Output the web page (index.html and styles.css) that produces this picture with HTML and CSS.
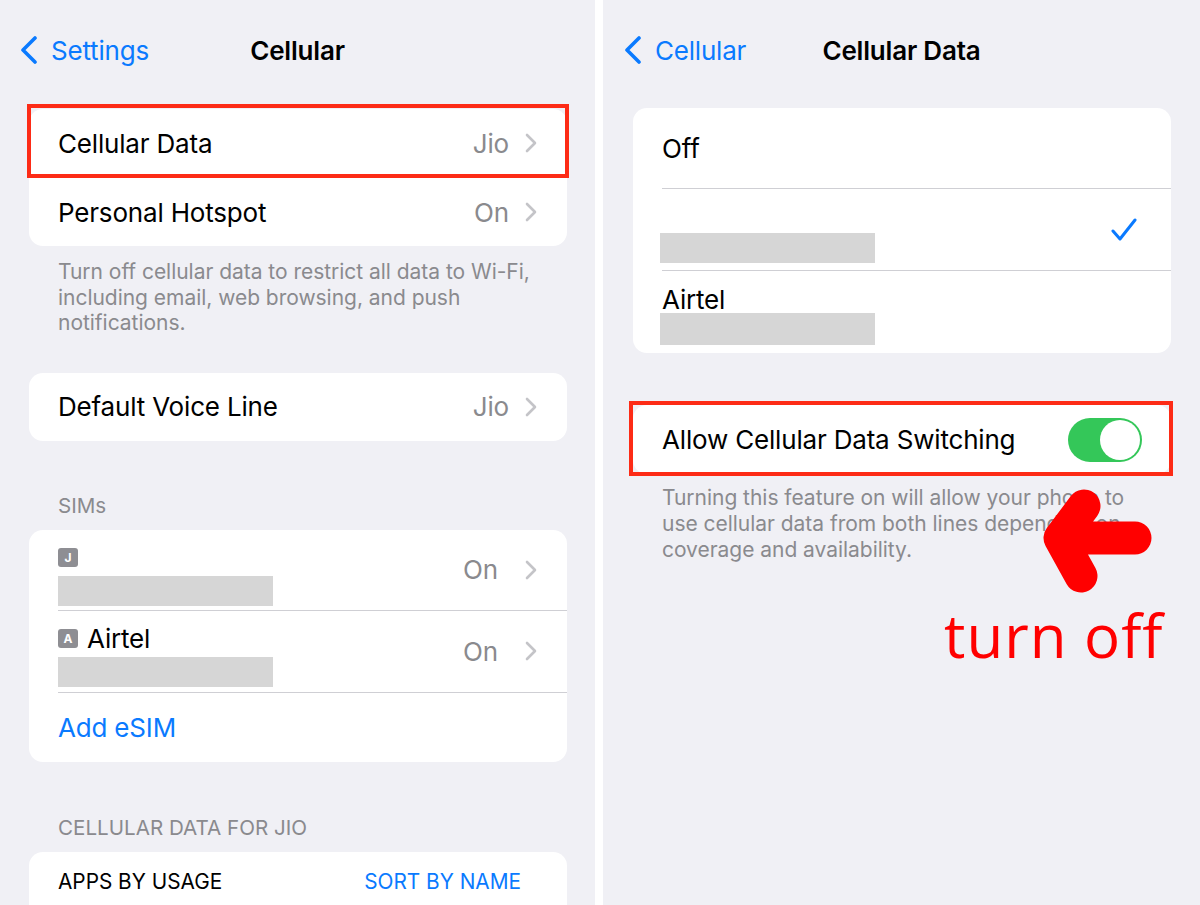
FILE: index.html
```html
<!DOCTYPE html>
<html lang="en">
<head>
<meta charset="utf-8">
<title>Cellular</title>
<link rel="stylesheet" href="styles.css">
</head>
<body>
<div class="screen">
  <section class="panel left">
    <header class="nav">
      <a class="back"><svg class="back-chev" viewBox="0 0 18 28"><path d="M15 2L3 14l12 12"/></svg><span>Settings</span></a>
      <h1 class="title">Cellular</h1>
      <span></span>
    </header>
    <div class="content">
      <div class="card c1">
        <div class="row h69 hl"><span class="label">Cellular Data</span><span class="acc"><span class="value">Jio</span><svg class="chev" viewBox="0 0 12 20"><path d="M2 2l8 8-8 8"/></svg></span></div>
        <div class="row h68"><span class="label">Personal Hotspot</span><span class="acc"><span class="value">On</span><svg class="chev" viewBox="0 0 12 20"><path d="M2 2l8 8-8 8"/></svg></span></div>
      </div>
      <p class="foot f1">Turn off cellular data to restrict all data to Wi-Fi, including email, web browsing, and push notifications.</p>
      <div class="card c2">
        <div class="row h68"><span class="label">Default Voice Line</span><span class="acc"><span class="value">Jio</span><svg class="chev" viewBox="0 0 12 20"><path d="M2 2l8 8-8 8"/></svg></span></div>
      </div>
      <h2 class="sec s1">SIMs</h2>
      <div class="card c3">
        <div class="row sim h81">
          <div class="simleft">
            <div class="simname"><span class="badge">J</span></div>
            <div class="bar"></div>
          </div>
          <span class="acc wide"><span class="value">On</span><svg class="chev" viewBox="0 0 12 20"><path d="M2 2l8 8-8 8"/></svg></span>
        </div>
        <div class="row sim h82">
          <div class="simleft">
            <div class="simname"><span class="badge">A</span><span class="label">Airtel</span></div>
            <div class="bar"></div>
          </div>
          <span class="acc wide"><span class="value">On</span><svg class="chev" viewBox="0 0 12 20"><path d="M2 2l8 8-8 8"/></svg></span>
        </div>
        <div class="row h69"><span class="label link">Add eSIM</span></div>
      </div>
      <h2 class="sec s2">CELLULAR DATA FOR JIO</h2>
      <div class="card c4">
        <div class="row h60 small"><span class="apps">APPS BY USAGE</span><span class="sort">SORT BY NAME</span></div>
      </div>
    </div>
  </section>

  <section class="panel right">
    <header class="nav">
      <a class="back"><svg class="back-chev" viewBox="0 0 18 28"><path d="M15 2L3 14l12 12"/></svg><span>Cellular</span></a>
      <h1 class="title">Cellular Data</h1>
      <span></span>
    </header>
    <div class="content">
      <div class="card r1">
        <div class="row h81"><span class="label">Off</span></div>
        <div class="row h82 line">
          <div class="simleft">
            <div class="simname"></div>
            <div class="bar"></div>
          </div>
          <svg class="check" viewBox="0 0 26 24"><path d="M2 13l7 8L24 2"/></svg>
        </div>
        <div class="row h82 line">
          <div class="simleft">
            <div class="simname"><span class="label">Airtel</span></div>
            <div class="bar tight"></div>
          </div>
        </div>
      </div>
      <div class="card r2">
        <div class="row h69 hl2"><span class="label">Allow Cellular Data Switching</span><span class="toggle"><span class="knob"></span></span></div>
      </div>
      <p class="foot f2">Turning this feature on will allow your phone to use cellular data from both lines depending on coverage and availability.</p>
    </div>
    <svg class="arrow" viewBox="0 0 125 120"><path d="M26 58H99M48 26L24 58l21 38"/></svg>
    <div class="note">turn off</div>
  </section>
</div>
</body>
</html>
```
FILE: styles.css
```css
* { box-sizing: border-box; }
body {
  margin: 0;
  background: #ffffff;
  font-family: Inter, "Noto Sans", sans-serif;
  color: #000;
}
.screen {
  display: flex;
  gap: 8px;
  width: 1200px;
  height: 905px;
  overflow: hidden;
  background: #ffffff;
}
.panel {
  position: relative;
  background: #f0f0f5;
  overflow: hidden;
  height: 905px;
}
.panel.left { width: 595px; }
.panel.right { width: 597px; }

.nav {
  height: 100px;
  display: grid;
  grid-template-columns: 1fr auto 1fr;
  align-items: center;
}
.back {
  display: flex;
  align-items: center;
  gap: 13px;
  padding-left: 20px;
  color: #0a7aff;
  font-size: 26px;
  letter-spacing: -0.2px;
}
.right .back { padding-left: 21px; }
.back-chev {
  width: 18px;
  height: 28px;
  fill: none;
  stroke: #0a7aff;
  stroke-width: 3.6;
  stroke-linecap: round;
  stroke-linejoin: round;
}
.title {
  margin: 0;
  font-size: 26px;
  font-weight: 600;
  letter-spacing: -0.2px;
}

.content { padding: 0 28px 0 29px; }
.right .content { padding: 0 29px 0 30px; }

.card {
  background: #ffffff;
  border-radius: 14px;
}
.c1 { margin-top: 9px; }
.c2 { margin-top: 37px; }
.c3 { margin-top: 12px; }
.c4 { margin-top: 12px; border-radius: 14px 14px 0 0; }
.r1 { margin-top: 8px; }
.r2 { margin-top: 52px; }

.row {
  position: relative;
  display: flex;
  align-items: center;
  justify-content: space-between;
  margin-left: 29px;
  padding-right: 30px;
  border-bottom: 1px solid #cfcfd4;
}
.row:last-child { border-bottom: none; }
.h60 { height: 60px; }
.h68 { height: 68px; }
.h69 { height: 69px; }
.h81 { height: 81px; }
.h82 { height: 82px; }

.label {
  font-size: 26px;
  letter-spacing: -0.18px;
  color: #000;
}
.link { color: #0a7aff; }
.acc {
  display: flex;
  align-items: center;
  gap: 16px;
}
.acc.wide { gap: 27px; }
.value {
  font-size: 26px;
  letter-spacing: -0.18px;
  color: #8a8a8e;
}
.chev {
  width: 12px;
  height: 20px;
  fill: none;
  stroke: #c4c4c8;
  stroke-width: 2.6;
  stroke-linecap: round;
  stroke-linejoin: round;
}

.hl::after,
.hl2::after {
  content: "";
  position: absolute;
  border: 4px solid #fd2b16;
  pointer-events: none;
}
.hl::after { top: -5px; bottom: -1px; left: -31px; right: -2px; }
.hl2::after { top: -4px; bottom: -2px; left: -33px; right: -2px; }

.foot {
  margin: 13px 0 0;
  padding: 0 29px 0 29px;
  font-size: 21px;
  line-height: 25.5px;
  color: #8a8a8e;
  letter-spacing: -0.03px;
}
.f2 { margin-top: 11px; line-height: 26px; }

.sec {
  margin: 0;
  padding-left: 29px;
  font-size: 20.6px;
  font-weight: 400;
  line-height: 24px;
  color: #8a8a8e;
}
.s1 { margin-top: 53px; }
.s2 { margin-top: 54px; }

.sim { align-items: flex-start; }
.sim .acc { align-self: center; }
.simleft {
  display: flex;
  flex-direction: column;
  padding-top: 16px;
}
.simname {
  height: 24px;
  display: flex;
  align-items: center;
  gap: 9px;
}
.badge {
  width: 20px;
  height: 19px;
  border-radius: 3px;
  background: #8e8e93;
  color: #fff;
  font-size: 12px;
  font-weight: 700;
  display: flex;
  align-items: center;
  justify-content: center;
}
.bar {
  width: 215px;
  height: 30px;
  margin-top: 6px;
  background: #d6d6d6;
}
.line .bar { margin-top: 4px; margin-left: -2px; }
.line .bar.tight { margin-top: 2px; height: 32px; }
.line { align-items: flex-start; }
.check {
  align-self: center;
  width: 26px;
  height: 24px;
  margin-right: 4px;
  fill: none;
  stroke: #0a7aff;
  stroke-width: 3;
  stroke-linecap: round;
  stroke-linejoin: round;
}

.small { padding-right: 46px; }
.apps { font-size: 20.8px; color: #000; }
.sort { font-size: 20.8px; color: #0a7aff; }

.toggle {
  width: 74px;
  height: 44px;
  border-radius: 22px;
  background: #34c759;
  display: flex;
  align-items: center;
  justify-content: flex-end;
  padding: 2px;
  margin-right: -1px;
}
.knob {
  width: 40px;
  height: 40px;
  border-radius: 50%;
  background: #fff;
}

.arrow {
  position: absolute;
  left: 433px;
  top: 480px;
  width: 125px;
  height: 120px;
  fill: none;
  stroke: #ff0000;
  stroke-width: 33;
  stroke-linecap: round;
  stroke-linejoin: round;
}
.note {
  position: absolute;
  left: 341px;
  top: 605px;
  font-family: "Open Sans", sans-serif;
  font-size: 60px;
  letter-spacing: 1px;
  line-height: 1;
  color: #ff0000;
}
```
